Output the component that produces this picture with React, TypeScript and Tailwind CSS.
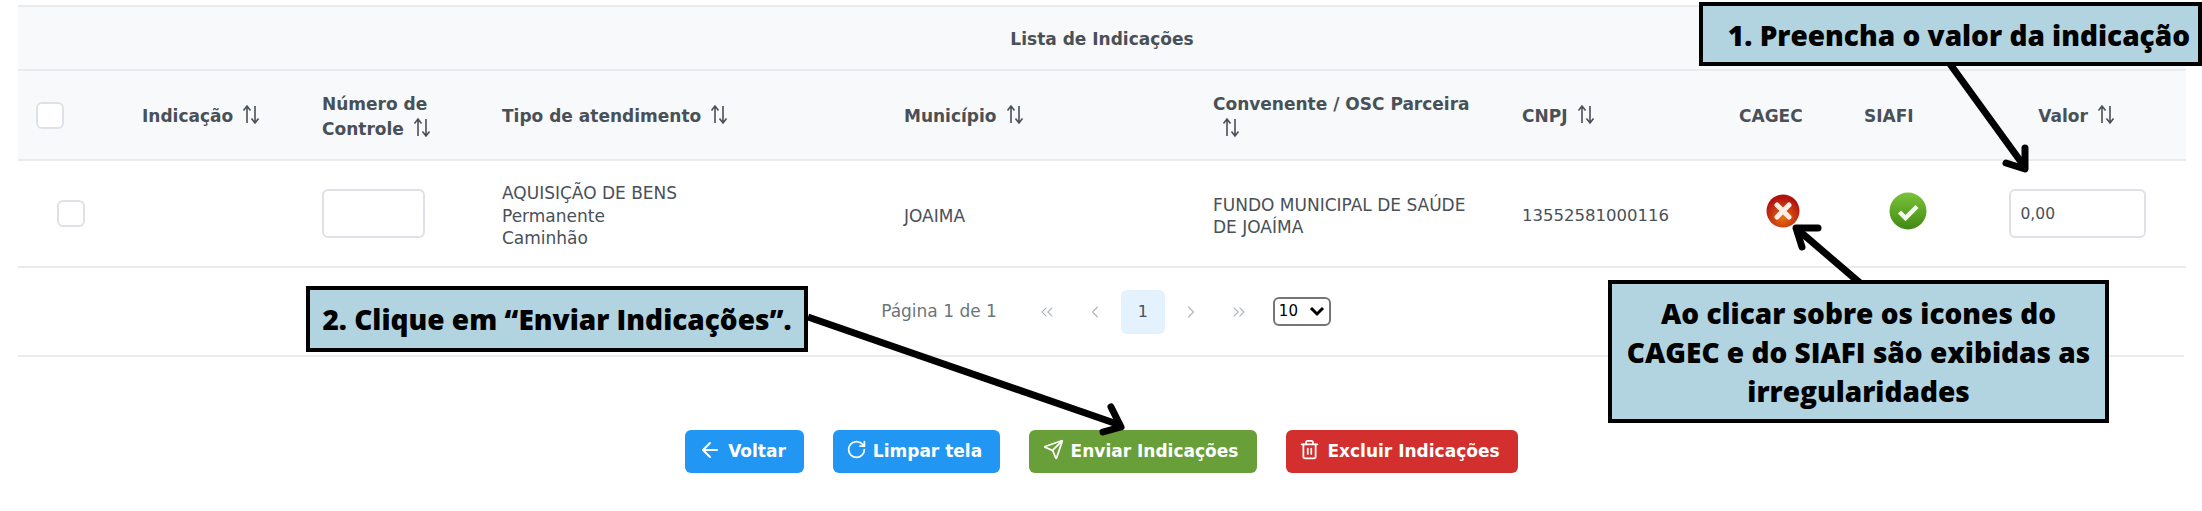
import React from "react";
import { ArrowLeft, RotateCw, Send, Trash2, ChevronsLeft, ChevronLeft, ChevronRight, ChevronsRight } from "lucide-react";

const SortIcon = () => (
  <svg className="inline-block ml-[8px] align-[-3px]" width="20" height="21" viewBox="0 0 20 21" fill="none" stroke="#495057" strokeWidth="1.6">
    <path d="M6 19V2M2.5 6.5L6 2l3.5 4.5" />
    <path d="M14 2v17M10.5 14.5L14 19l3.5-4.5" />
  </svg>
);

const ErrorIcon = () => (
  <svg width="34" height="34" viewBox="0 0 34 34">
    <defs>
      <radialGradient id="redFill" cx="50%" cy="70%" r="60%">
        <stop offset="0%" stopColor="#e8700f" />
        <stop offset="100%" stopColor="#b3130f" />
      </radialGradient>
    </defs>
    <circle cx="17" cy="17" r="16.5" fill="url(#redFill)" />
    <path d="M11 11l12 12M23 11L11 23" stroke="#fbeee6" strokeWidth="5" strokeLinecap="round" />
  </svg>
);

const OkIcon = () => (
  <svg width="38" height="38" viewBox="0 0 38 38">
    <defs>
      <linearGradient id="greenFill" x1="0" y1="0" x2="0" y2="1">
        <stop offset="0%" stopColor="#7cc23a" />
        <stop offset="100%" stopColor="#3f8a12" />
      </linearGradient>
    </defs>
    <circle cx="19" cy="19" r="18.5" fill="url(#greenFill)" />
    <path d="M10.5 20l6 6 11.5-11.5" fill="none" stroke="#f2f8ec" strokeWidth="4.5" />
  </svg>
);

const Check = ({ className }: { className?: string }) => (
  <div className={"w-[28px] h-[27px] bg-white border-2 border-[#dee2e6] rounded-md " + (className ?? "")} />
);

const thClass = "px-[18px] pt-[3px] font-bold text-[17px] leading-[25px] text-[#495057]";
const tdClass = "px-[18px] text-[17px] leading-[22.5px] text-[#495057]";

export default function App() {
  return (
    <div className="relative w-[2202px] h-[511px] overflow-hidden bg-white font-['DejaVu_Sans',sans-serif]">
      <div className="pt-[5px] px-[18px]">
        <table className="table-fixed w-[2168px] border-collapse">
          <colgroup>
            <col className="w-[106px]" />
            <col className="w-[180px]" />
            <col className="w-[180px]" />
            <col className="w-[402px]" />
            <col className="w-[309px]" />
            <col className="w-[309px]" />
            <col className="w-[217px]" />
            <col className="w-[125px]" />
            <col className="w-[122px]" />
            <col className="w-[218px]" />
          </colgroup>
          <thead>
            <tr className="h-[64px] bg-[#f8f9fa] border-y-2 border-[#e9ecef]">
              <th colSpan={10} className="pt-[3px] text-center font-bold text-[17px] text-[#495057]">
                Lista de Indicações
              </th>
            </tr>
            <tr className="h-[90px] bg-[#f8f9fa] border-b-2 border-[#e9ecef] text-left">
              <th className="px-[18px]"><Check /></th>
              <th className={thClass}>Indicação<SortIcon /></th>
              <th className={thClass}>Número de<br />Controle<SortIcon /></th>
              <th className={thClass}>Tipo de atendimento<SortIcon /></th>
              <th className={thClass}>Município<SortIcon /></th>
              <th className={thClass}>Convenente / OSC Parceira<br /><SortIcon /></th>
              <th className={thClass}>CNPJ<SortIcon /></th>
              <th className={thClass}>CAGEC</th>
              <th className={thClass}>SIAFI</th>
              <th className={thClass}><div className="text-center">Valor<SortIcon /></div></th>
            </tr>
          </thead>
          <tbody>
            <tr className="h-[107px] border-b-2 border-[#e9ecef]">
              <td className={tdClass}><Check className="mx-auto" /></td>
              <td className={tdClass}></td>
              <td className={tdClass}>
                <input className="block w-[103px] h-[49px] bg-white border-2 border-[#dee2e6] rounded-md" />
              </td>
              <td className={tdClass + " pt-[5px]"}>AQUISIÇÃO DE BENS<br />Permanente<br />Caminhão</td>
              <td className={tdClass + " pt-[5px]"}>JOAIMA</td>
              <td className={tdClass + " pt-[5px]"}>FUNDO MUNICIPAL DE SAÚDE<br />DE JOAÍMA</td>
              <td className="px-[18px] pt-[5px] text-[16.5px] leading-[22.5px] text-[#495057]">13552581000116</td>
              <td className={tdClass}><div className="pl-[27px] -mt-[6px]"><ErrorIcon /></div></td>
              <td className={tdClass}><div className="pl-[25px] -mt-[6px]"><OkIcon /></div></td>
              <td className={tdClass}>
                <input
                  defaultValue="0,00"
                  className="block mx-auto w-[137px] h-[49px] px-[10px] bg-white border-2 border-[#dee2e6] rounded-md text-[15.5px] text-[#495057]"
                />
              </td>
            </tr>
          </tbody>
        </table>

        <div className="h-[89px] flex items-center justify-center gap-[4px] pl-[10px] border-b-2 border-[#e9ecef] text-[#6c757d]">
          <span className="text-[17px] mr-[24px]">Página 1 de 1</span>
          <span className="w-[44px] h-[44px] flex items-center justify-center text-[#adb5bd]"><ChevronsLeft size={20} strokeWidth={1.3} /></span>
          <span className="w-[44px] h-[44px] flex items-center justify-center text-[#adb5bd]"><ChevronLeft size={20} strokeWidth={1.3} /></span>
          <span className="w-[44px] h-[44px] flex items-center justify-center rounded-md bg-[#e3f2fd] text-[16px] text-[#495057]">1</span>
          <span className="w-[44px] h-[44px] flex items-center justify-center text-[#adb5bd]"><ChevronRight size={20} strokeWidth={1.3} /></span>
          <span className="w-[44px] h-[44px] flex items-center justify-center text-[#adb5bd]"><ChevronsRight size={20} strokeWidth={1.3} /></span>
          <div className="relative ml-[8px] w-[58px] h-[29px]">
            <select className="w-full h-full pl-[4px] appearance-none border-2 border-[#767676] rounded-md bg-white text-[15px] text-black">
              <option>10</option>
            </select>
            <svg className="absolute right-[6px] top-[9px] pointer-events-none" width="16" height="11" viewBox="0 0 16 11" fill="none" stroke="black" strokeWidth="3">
              <path d="M2 2l6 6 6-6" />
            </svg>
          </div>
        </div>
      </div>

      <div className="mt-[73px] flex justify-center gap-[29px] font-bold text-[17px] text-white">
        <button className="w-[119px] h-[43px] flex items-center justify-center gap-[6px] pr-[4px] rounded-md bg-[#2196f3]">
          <ArrowLeft size={24} strokeWidth={2} className="-mt-[4px]" />Voltar
        </button>
        <button className="w-[167px] h-[43px] flex items-center justify-center gap-[6px] pr-[4px] rounded-md bg-[#2196f3]">
          <RotateCw size={21} strokeWidth={2} className="-mt-[4px]" />Limpar tela
        </button>
        <button className="w-[228px] h-[43px] flex items-center justify-center gap-[7px] pr-[4px] rounded-md bg-[#689f38]">
          <Send size={21} strokeWidth={2} className="-mt-[4px]" />Enviar Indicações
        </button>
        <button className="w-[232px] h-[43px] flex items-center justify-center gap-[7px] pr-[4px] rounded-md bg-[#d32f2f]">
          <Trash2 size={21} strokeWidth={2} className="-mt-[4px]" />Excluir Indicações
        </button>
      </div>

      {/* annotations laid over the screenshot */}
      <svg className="absolute left-0 top-0 pointer-events-none" width="2202" height="511" fill="none" stroke="black" strokeWidth="7">
        <path d="M1950 64L2024 166" />
        <path d="M2006 163L2025 169L2025 148" strokeLinecap="round" strokeLinejoin="round" />
        <path d="M1860 283L1797 229" />
        <path d="M1818 228L1796 228L1802 247" strokeLinecap="round" strokeLinejoin="round" />
        <path d="M808 317L1120 425" />
        <path d="M1111 407L1121 427L1103 432" strokeLinecap="round" strokeLinejoin="round" />
      </svg>

      <div className="absolute left-[1699px] top-[2px] w-[503px] h-[64px] flex items-center justify-end pr-[8px] pt-[2px] border-[4px] border-black bg-[#b2d3e0] font-['Open_Sans',sans-serif] font-extrabold text-[28px] text-black whitespace-nowrap">
        1. Preencha o valor da indicação
      </div>
      <div className="absolute left-[306px] top-[286px] w-[502px] h-[66px] flex items-center justify-center border-[4px] border-black bg-[#b2d3e0] font-['Open_Sans',sans-serif] font-extrabold text-[28px] text-black whitespace-nowrap">
        2. Clique em “Enviar Indicações”.
      </div>
      <div className="absolute left-[1608px] top-[280px] w-[501px] h-[143px] flex items-center justify-center pt-[2px] text-center border-[4px] border-black bg-[#b2d3e0] font-['Open_Sans',sans-serif] font-extrabold text-[28px] leading-[39px] text-black">
        Ao clicar sobre os icones do<br />CAGEC e do SIAFI são exibidas as<br />irregularidades
      </div>
    </div>
  );
}
